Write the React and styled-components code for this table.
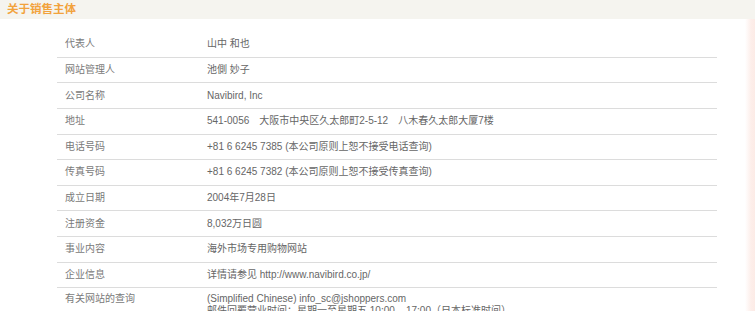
import React from "react";
import styled, { createGlobalStyle } from "styled-components";

const Global = createGlobalStyle`
  html, body { margin: 0; padding: 0; background: #fff; }
  body { font-family: "Liberation Sans", "Noto Sans CJK SC", sans-serif; }
`;

const Page = styled.div`
  width: 755px;
  height: 311px;
  overflow: hidden;
  display: flex;
  flex-direction: column;
`;

const Header = styled.h2`
  margin: 0;
  height: 19px;
  flex: none;
  background: #f5f4ef;
  color: #f2a23c;
  font-size: 11.5px;
  font-weight: bold;
  line-height: 19px;
  padding-left: 7px;
`;

const Body = styled.div`
  flex: 1;
  display: flex;
`;

const Main = styled.div`
  flex: 1;
  padding: 13px 0 0 57px;
`;

const Strip = styled.div`
  width: 10px;
  flex: none;
  background: linear-gradient(to right, #fff 0%, #fdeeea 60%, #fcebe6 100%);
`;

const Table = styled.div`
  width: 660px;
  display: flex;
  flex-direction: column;
`;

const Row = styled.div`
  box-sizing: border-box;
  min-height: 25.63px;
  display: grid;
  grid-template-columns: 150px 1fr;
  align-items: ${(p) => (p.$multi ? "start" : "center")};
  padding-top: ${(p) => (p.$multi ? "4.5px" : "0")};
  border-bottom: ${(p) => (p.$last ? "none" : "1px solid #dcdcdc")};
  font-size: 10px;
  line-height: 12px;
`;

const Label = styled.div`
  padding-left: 8px;
  color: #7a7a7a;
`;

const Value = styled.div`
  color: #666;
  white-space: pre;
`;

const rows = [
  ["代表人", "山中 和也"],
  ["网站管理人", "池側 妙子"],
  ["公司名称", "Navibird, Inc"],
  ["地址", "541-0056　大阪市中央区久太郎町2-5-12　八木春久太郎大厦7楼"],
  ["电话号码", "+81 6 6245 7385 (本公司原则上恕不接受电话查询)"],
  ["传真号码", "+81 6 6245 7382 (本公司原则上恕不接受传真查询)"],
  ["成立日期", "2004年7月28日"],
  ["注册资金", "8,032万日圆"],
  ["事业内容", "海外市场专用购物网站"],
  ["企业信息", "详情请参见 http://www.navibird.co.jp/"],
];

export default function App() {
  return (
    <Page>
      <Global />
      <Header>关于销售主体</Header>
      <Body>
        <Main>
          <Table>
            {rows.map(([l, v]) => (
              <Row key={l}>
                <Label>{l}</Label>
                <Value>{v}</Value>
              </Row>
            ))}
            <Row $multi $last>
              <Label>有关网站的查询</Label>
              <Value>
                {"(Simplified Chinese) info_sc@jshoppers.com\n邮件回覆营业时间：星期一至星期五 10:00 – 17:00（日本标准时间）"}
              </Value>
            </Row>
          </Table>
        </Main>
        <Strip />
      </Body>
    </Page>
  );
}
